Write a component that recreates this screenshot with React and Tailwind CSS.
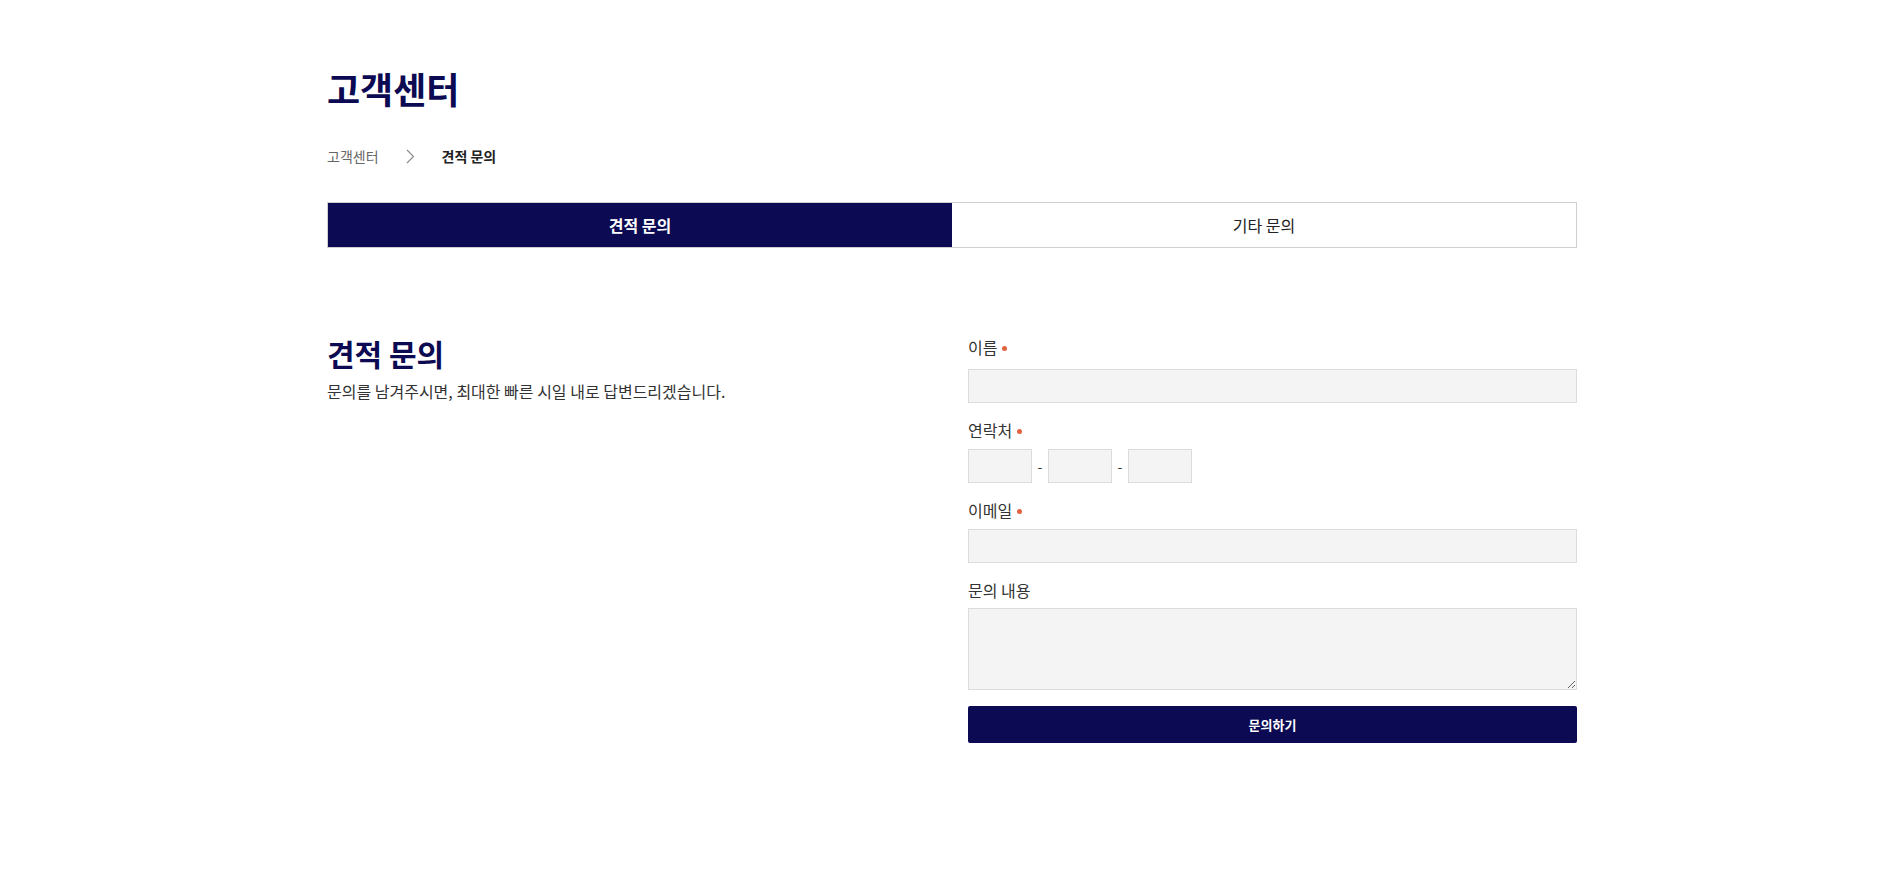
import React from 'react';

const NAVY = 'bg-[#0b0a52]';

function Label({ children, required }) {
  return (
    <label className="flex h-6 items-center text-[16px] text-[#333]">
      {children}
      {required && <span className="ml-[5px] mt-[3px] h-[5px] w-[5px] rounded-full bg-[#e2633f]" />}
    </label>
  );
}

const fieldCls = 'block h-[34px] w-full border border-[#dcdcdc] bg-[#f4f4f4] px-3 text-[14px] outline-none';
const phoneCls = 'h-[34px] w-16 border border-[#dcdcdc] bg-[#f4f4f4] outline-none';

export default function App() {
  return (
    <div className="min-h-screen bg-white font-['Noto_Sans_CJK_KR',sans-serif] text-[#222]">
      <div className="mx-auto w-[1254px] pl-[4px] pt-[64px] pb-[130px]">
        <h1 className="text-[36px] font-bold leading-[48px] text-[#0b0a52]">고객센터</h1>

        <nav className="mt-[34px] flex items-center text-[14px] leading-5">
          <span className="text-[#666]">고객센터</span>
          <svg className="mx-[27px]" width="9" height="15" viewBox="0 0 9 15" fill="none">
            <path d="M1 1l6.5 6.5L1 14" stroke="#888" strokeWidth="1.1" />
          </svg>
          <span className="font-semibold text-[#222]">견적 문의</span>
        </nav>

        <div className="mt-[36px] grid h-[46px] grid-cols-2 border border-[#cfcfcf] text-[16px]">
          <button className={`${NAVY} font-bold text-white`}>견적 문의</button>
          <button className="bg-white text-[#222]">기타 문의</button>
        </div>

        <section className="mt-[87px] flex justify-between">
          <div>
            <h2 className="text-[30px] font-bold leading-[36px] text-[#0b0a52]">견적 문의</h2>
            <p className="mt-[8px] text-[16px] leading-6 text-[#333]">
              문의를 남겨주시면, 최대한 빠른 시일 내로 답변드리겠습니다.
            </p>
          </div>

          <form className="w-[609px]" onSubmit={(e) => e.preventDefault()}>
            <Label required>이름</Label>
            <input className={`${fieldCls} mt-[10px]`} />

            <div className="mt-[15px]">
              <Label required>연락처</Label>
              <div className="mt-[7px] flex items-center">
                <input className={phoneCls} />
                <span className="w-4 text-center text-[14px] text-[#333]">-</span>
                <input className={phoneCls} />
                <span className="w-4 text-center text-[14px] text-[#333]">-</span>
                <input className={phoneCls} />
              </div>
            </div>

            <div className="mt-[15px]">
              <Label required>이메일</Label>
              <input className={`${fieldCls} mt-[7px]`} />
            </div>

            <div className="mt-[15px]">
              <Label>문의 내용</Label>
              <textarea className="mt-[6px] block h-[82px] w-full border border-[#dcdcdc] bg-[#f4f4f4] p-2 text-[14px] outline-none" />
            </div>

            <button type="submit" className={`${NAVY} mt-4 h-[37px] w-full rounded-[2px] text-[13px] font-bold text-white`}>
              문의하기
            </button>
          </form>
        </section>
      </div>
    </div>
  );
}
